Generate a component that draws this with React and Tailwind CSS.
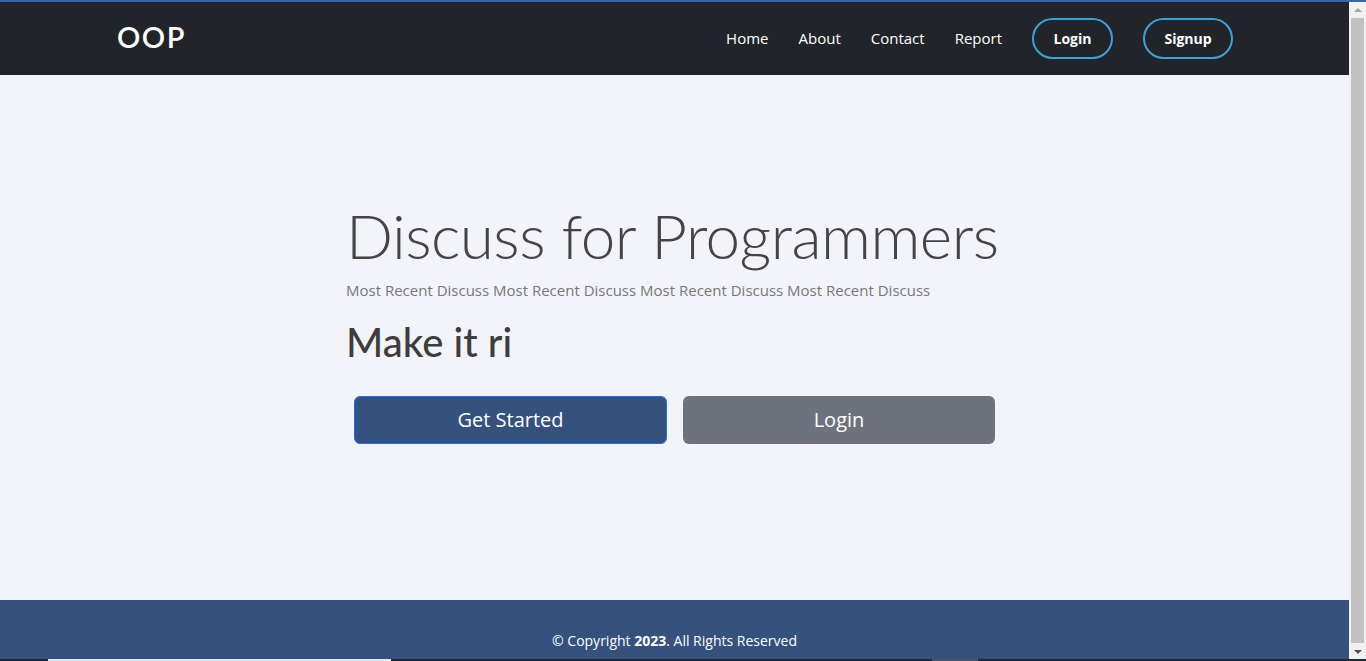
export default function App() {
  return (
    <div className="w-[1366px] h-[661px] overflow-hidden flex flex-col bg-[#f3f4f9]" style={{ fontFamily: '"Open Sans", sans-serif' }}>
      <div className="h-[2px] bg-[#3567b0] shrink-0" />
      <div className="flex flex-1 min-h-0">
        <div className="flex-1 flex flex-col min-w-0">
          <nav className="h-[73px] bg-[#212529] flex items-center shrink-0">
            <div className="w-[117px] shrink-0" />
            <div className="text-white text-[29px] font-semibold tracking-[1.5px] leading-none mb-[4px]" style={{ fontFamily: '"Lato", sans-serif' }}>OOP</div>
            <div className="flex-1" />
            <div className="flex items-center text-white text-[15px]">
              <a className="mr-[30px]">Home</a>
              <a className="mr-[30px]">About</a>
              <a className="mr-[30px]">Contact</a>
              <a className="mr-[30px]">Report</a>
              <button className="w-[81px] h-[41px] rounded-full border-2 border-[#3ba3da] text-white text-[14px] font-bold mr-[30px]">Login</button>
              <button className="w-[90px] h-[41px] rounded-full border-2 border-[#3ba3da] text-white text-[14px] font-bold">Signup</button>
            </div>
            <div className="w-[116px] shrink-0" />
          </nav>
          <main className="flex-1 flex flex-col pl-[346px] pt-[129px]">
            <h1 className="text-[#444] text-[62px] font-light leading-none tracking-[-0.5px]" style={{ fontFamily: '"Lato", sans-serif' }}>Discuss for Programmers</h1>
            <p className="text-[#777] text-[15px] mt-[14px] leading-[20px]">Most Recent Discuss Most Recent Discuss Most Recent Discuss Most Recent Discuss</p>
            <h2 className="text-[#3d3d3d] text-[40px] font-medium leading-none mt-[22px]" style={{ fontFamily: '"Lato", sans-serif' }}>Make it ri</h2>
            <div className="flex gap-[16px] mt-[34px] ml-[8px]">
              <button className="w-[313px] h-[48px] rounded-[6px] bg-[#35517e] border border-[#1d6ff0] text-white text-[20px]">Get Started</button>
              <button className="w-[312px] h-[48px] rounded-[6px] bg-[#6c737d] text-white text-[20px]">Login</button>
            </div>
          </main>
          <footer className="h-[59px] bg-[#35517e] flex items-end justify-center pb-[8px] shrink-0">
            <p className="text-white text-[14px]">© Copyright <b>2023</b>. All Rights Reserved</p>
          </footer>
        </div>
        <div className="w-[17px] bg-[#f1f1f1] flex flex-col items-center shrink-0">
          <div className="h-[15px] flex items-center justify-center">
            <div className="w-0 h-0 border-l-[4px] border-r-[4px] border-b-[4px] border-l-transparent border-r-transparent border-b-[#a3a3a3]" />
          </div>
          <div className="w-[13px] flex-1 bg-[#c1c1c1] mt-[1px] mb-[1px]" />
          <div className="h-[15px] flex items-center justify-center">
            <div className="w-0 h-0 border-l-[4px] border-r-[4px] border-t-[4px] border-l-transparent border-r-transparent border-t-[#505050]" />
          </div>
        </div>
      </div>
      <div className="h-[2px] bg-[#1e2a33] flex shrink-0">
        <div className="w-[48px]" />
        <div className="w-[343px] bg-[#e8e8e8]" />
        <div className="w-[541px]" />
        <div className="w-[46px] bg-[#4a5560]" />
      </div>
    </div>
  );
}
